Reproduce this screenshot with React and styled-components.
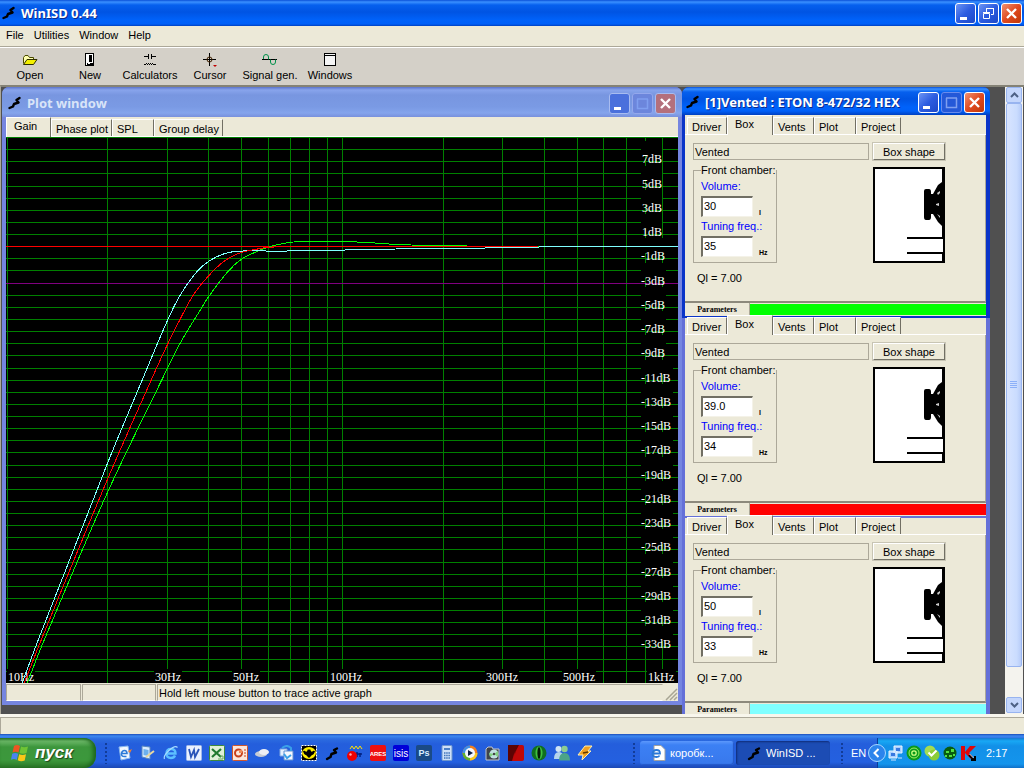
import React from 'react'
import styled, { createGlobalStyle, css } from 'styled-components'

const GlobalStyle = createGlobalStyle`
    * {
        box-sizing: border-box;
    }
    body {
        margin: 0;
        background: #ece9d8;
        font-family: "Liberation Sans", Arial, sans-serif;
        font-size: 11px;
        line-height: 13px;
        color: #000;
    }
    button, input {
        font: inherit;
        color: inherit;
        margin: 0;
        padding: 0;
    }
`

const FREQ_LINES = [10, 20, 30, 40, 50, 60, 70, 80, 90, 100, 200, 300, 400, 500, 600, 700, 800, 900, 1000]

const FREQ_LABELS = [
    { text: '10Hz', x: 1, w: 28 },
    { text: '30Hz', x: 148, w: 28 },
    { text: '50Hz', x: 226, w: 28 },
    { text: '100Hz', x: 323, w: 34 },
    { text: '300Hz', x: 479, w: 34 },
    { text: '500Hz', x: 556, w: 34 },
    { text: '1kHz', x: 641, w: 29 },
]

const CURVES = [
    {
        color: '#00ff00',
        points: [[27, 683], [44, 640], [107, 493], [162, 379], [180, 343], [200, 310], [208, 297], [228, 271], [241, 259], [257, 251], [267, 247], [283, 243], [300, 241], [342, 241], [367, 242], [397, 244], [433, 245], [500, 246], [540, 246], [678, 246]],
    },
    {
        color: '#80ffff',
        points: [[22, 683], [38, 640], [107, 464], [142, 380], [167, 321], [180, 295], [197, 271], [210, 260], [225, 253], [240, 250.6], [280, 250.6], [320, 250], [370, 249], [424, 248], [538, 247], [540, 246], [678, 246]],
    },
    {
        color: '#ff0000',
        points: [[24, 683], [41, 640], [107, 480], [151, 380], [167, 345], [180, 319], [193, 295], [208, 276], [225, 260], [241, 252], [255, 249], [267, 247], [290, 246], [538, 246]],
    },
]

const PROJECTS = [
    { id: 1, title: '[1]Vented : ETON 8-472/32 HEX', volume: '30', tuning: '35', color: '#00ff00' },
    { id: 2, volume: '39.0', tuning: '34', color: '#ff0000' },
    { id: 3, volume: '50', tuning: '33', color: '#80ffff' },
]

const PROJECT_TABS = [
    { name: 'Driver', width: 40 },
    { name: 'Box', width: 46 },
    { name: 'Vents', width: 41 },
    { name: 'Plot', width: 42 },
    { name: 'Project', width: 45 },
]

const PLOT_TABS = [
    { name: 'Gain', width: 45 },
    { name: 'Phase plot', width: 61 },
    { name: 'SPL', width: 42 },
    { name: 'Group delay', width: 69 },
]

/* ---------- icons ---------- */

const Logo = ({ size = 14 }) => (
    <svg width={size} height={size} viewBox="0 0 14 14" aria-hidden="true">
        <path d="M11.500 2L8.500 4L10.500 6.500L6 8L5 10.500L1.500 12" fill="none" stroke="#000" strokeWidth="2.400" strokeLinejoin="round" strokeLinecap="round" />
    </svg>
)

const OpenIcon = () => (
    <svg width="16" height="14" viewBox="0 0 16 14">
        <path d="M1.500 10.500V4.500L3 2.500H6L7.500 4.500H11.500V6.500" fill="#ffffb0" stroke="#4a4a00" />
        <path d="M1.500 11.500L5 6.500H15L11.500 11.500Z" fill="#f4f000" stroke="#303000" />
    </svg>
)

const NewIcon = () => (
    <svg width="16" height="14" viewBox="0 0 16 14" shapeRendering="crispEdges">
        <rect x="3.500" y=".5" width="8" height="12" fill="#fff" stroke="#000" />
        <path d="M7 2h3v7h-3zM5 10h6v2h-6z" fill="#000" />
        <path d="M6 10h2v1h-2z" fill="#fff" />
    </svg>
)

const CalcIcon = () => (
    <svg width="16" height="14" viewBox="0 0 16 14" shapeRendering="crispEdges">
        <path d="M2 3.500H7M9 3.500H14M6.500 1V6M9.500 1V6" stroke="#000" fill="none" />
        <path d="M2 11h2v1H2zM12 11h2v1h-2zM4 10h1v1H4zM5 11h1v1H5zM6 10h1v1H6zM7 11h1v1H7zM8 10h1v1H8zM9 11h1v1H9zM10 10h1v1h-1zM11 11h1v1h-1z" fill="#000" />
    </svg>
)

const CursorIcon = () => (
    <svg width="16" height="14" viewBox="0 0 16 14">
        <path d="M7.500 0V13M1 6.500H14" stroke="#000" fill="none" />
        <circle cx="7.500" cy="6.500" r="2.500" stroke="#402000" fill="none" />
        <path d="M11 12h4l-2 2z" fill="#c00000" />
    </svg>
)

const SignalIcon = () => (
    <svg width="16" height="14" viewBox="0 0 16 14">
        <path d="M0 6.500H15" stroke="#000" />
        <path d="M1.500 6V4Q1.500 1.500 4 1.500T6.500 4V6.500M8.500 6.500V9Q8.500 11.500 11 11.500T13.500 9V6.500" stroke="#00904a" fill="none" />
    </svg>
)

const WindowsIcon = () => (
    <svg width="16" height="14" viewBox="0 0 16 14" shapeRendering="crispEdges">
        <rect x="2.500" y=".5" width="11" height="12" fill="#f4f4f4" stroke="#000" />
        <path d="M2 2.500H14" stroke="#000" />
    </svg>
)

const MinimizeGlyph = () => (
    <svg width="19" height="19" viewBox="0 0 19 19"><path d="M4 13h7v3h-7z" fill="#fff" /></svg>
)

const MaximizeGlyph = () => (
    <svg width="19" height="19" viewBox="0 0 19 19">
        <path d="M4.500 5v9.500h10V5M4 5h11" fill="none" stroke="#7f9ff0" strokeWidth="1.500" />
    </svg>
)

const RestoreGlyph = () => (
    <svg width="19" height="19" viewBox="0 0 19 19">
        <path d="M7.500 8V4.500H14.500V10.500H12M7 4.500H15" fill="none" stroke="#fff" />
        <path d="M4.500 9.500H10.500V14.500H4.500zM4 8.500H11" fill="none" stroke="#fff" />
    </svg>
)

const CloseGlyph = () => (
    <svg width="19" height="19" viewBox="0 0 19 19"><path d="M5 5L14 14M14 5L5 14" stroke="#fff" strokeWidth="2.400" /></svg>
)

const WindowsFlag = () => (
    <svg width="20" height="20" viewBox="0 0 20 20">
        <path d="M4 3Q7 1 10 3L8.500 9.500Q5.500 8 2.500 9.500Z" fill="#ee5522" />
        <path d="M11 3.500Q14 5 18 3.500L16.500 10Q13 11.500 9.500 10Z" fill="#6fc435" />
        <path d="M2.200 10.700Q5 9.200 8.200 10.700L6.700 17Q4 15.300 1 16.800Z" fill="#4a84f0" />
        <path d="M9.200 11.300Q12.500 12.700 16 11.300L14.700 17.500Q11 19 7.700 17.300Z" fill="#fbc718" />
    </svg>
)

const IeGlyph = () => (
    <>
        <path d="M3.500 8.500H12.500Q12.500 4 8 4T3.500 8.500T8 13Q11 13 12 10.500" fill="none" stroke="#5cc0ff" strokeWidth="2.400" />
        <path d="M1.500 14Q0 11 6 5.500T14.500 2.500" fill="none" stroke="#a8dcff" strokeWidth="1.200" />
    </>
)

const Tile = ({ fill, stroke, children }) => (
    <>
        <rect x=".5" y=".5" width="15" height="15" rx="1" fill={fill} stroke={stroke || fill} />
        {children}
    </>
)

const GLYPHS = {
    outlook: (
        <>
            <path d="M2 2l9-1 2 12-9 2z" fill="#f2f8ff" stroke="#8ab8ee" />
            <path d="M4.500 8.500H10Q10 5.500 7.500 5.500T4.500 8.500T7.500 11.500H9.500" fill="none" stroke="#2c7ad8" strokeWidth="1.600" />
            <path d="M11 6l4-2-2 4z" fill="#f08030" />
        </>
    ),
    desktop: (
        <>
            <path d="M2 1l8 1v12l-8-2z" fill="#d8ecff" stroke="#5a88c0" />
            <path d="M3.500 4l5 1v6l-5-1z" fill="#6cb0ee" />
            <path d="M6 12L14 6" stroke="#e8d8a0" strokeWidth="2" />
        </>
    ),
    ie: <IeGlyph />,
    word: (
        <Tile fill="#eaf1ff" stroke="#a0b8e8">
            <path d="M3 4l2 8 3-7 1 7 4-8" fill="none" stroke="#2a54b8" strokeWidth="1.800" />
        </Tile>
    ),
    excel: (
        <Tile fill="#dff0d8" stroke="#3f8a3c">
            <path d="M3 4l9 8M12 4l-9 8" stroke="#217a30" strokeWidth="2.200" />
            <path d="M11 11h3v3h-5" fill="none" stroke="#6aa860" />
        </Tile>
    ),
    powerpoint: (
        <Tile fill="#fbe6dc" stroke="#d0562c">
            <circle cx="6.500" cy="8" r="3.500" fill="none" stroke="#c8401c" strokeWidth="2" />
            <path d="M7 8V5h3v3z" fill="#f08858" />
            <path d="M12 5h2M12 8h2M12 11h2" stroke="#c8401c" />
        </Tile>
    ),
    cloud: (
        <>
            <ellipse cx="6" cy="9" rx="6" ry="3" fill="#c8ccd4" />
            <ellipse cx="9" cy="7" rx="5" ry="3" fill="#eef0f4" />
        </>
    ),
    sync: (
        <>
            <path d="M2 4h7v7H2z" fill="#e4f0ff" stroke="#80a8e0" />
            <path d="M6 6h9v9H6z" fill="#f4f8ff" stroke="#6090d0" />
            <path d="M4 3Q9-1 13 3v3M6 9l3 4 4-3" fill="none" stroke="#3aa0e8" strokeWidth="2" />
        </>
    ),
    bat: (
        <>
            <rect x=".5" y=".5" width="15" height="15" fill="#000" stroke="#fff" strokeDasharray="2 1" />
            <ellipse cx="8" cy="8" rx="7" ry="6" fill="#ffee00" />
            <path d="M2 6Q4 5 5 7Q6 7 7 4L8 5L9 4Q10 7 11 7Q12 5 14 6Q13 10 11 10L8 13L5 10Q3 10 2 6Z" fill="#000" />
        </>
    ),
    winisd: <path d="M13 3.500L10 5L12 7.500L7.500 9L6.500 12L3 14" fill="none" stroke="#000" strokeWidth="2.400" strokeLinecap="round" strokeLinejoin="round" />,
    ball: (
        <>
            <path d="M3 4l2-3 2 3 2-3 2 3 2-3 2 3" fill="none" stroke="#ffe000" />
            <path d="M8 9h7M10 7v5M13 8v4" stroke="#002080" strokeWidth="1.500" />
            <circle cx="5" cy="11" r="5" fill="#f00000" />
            <circle cx="3.500" cy="9.500" r="1.200" fill="#ffb0b0" />
        </>
    ),
    ares: (
        <Tile fill="#ee1010">
            <text x="8" y="11" fontFamily="Liberation Sans" fontWeight="bold" fontSize="6" textAnchor="middle" fill="#fff">ARES</text>
        </Tile>
    ),
    isis: (
        <Tile fill="#0000d8">
            <text x="8" y="12" fontFamily="Liberation Sans" fontSize="10" textAnchor="middle" fill="#fff">isis</text>
        </Tile>
    ),
    photoshop: (
        <Tile fill="#1a4a86">
            <text x="8" y="11" fontFamily="Liberation Sans" fontWeight="bold" fontSize="9" textAnchor="middle" fill="#d8ecff">Ps</text>
        </Tile>
    ),
    calc: (
        <>
            <rect x="3" y=".5" width="10" height="15" rx="1" fill="#cfe0f8" stroke="#6f96cc" />
            <path d="M5 3h6v2H5z" fill="#4c80c8" />
            <path d="M5 8h6M5 10.500h6M5 13h6" stroke="#3c70b8" strokeWidth="1.500" strokeDasharray="1.500 .7" />
        </>
    ),
    player: (
        <>
            <circle cx="8" cy="8" r="7.500" fill="#f08020" />
            <path d="M8 8L8 .5A7.500 7.500 0 0 0 .5 8z" fill="#3f90e8" />
            <path d="M8 8H.5A7.500 7.500 0 0 0 8 15.500z" fill="#60b030" />
            <path d="M8 8v7.500A7.500 7.500 0 0 0 15.500 8z" fill="#f8c820" />
            <circle cx="8" cy="8" r="5" fill="#f4f8ff" />
            <path d="M6 5v6l5-3z" fill="#102040" />
        </>
    ),
    media: (
        <>
            <path d="M1 4l2-2h4l1 2h6v11H1z" fill="#40444c" stroke="#c0c4cc" />
            <circle cx="9" cy="9" r="4.500" fill="#c0e0e0" />
            <path d="M9 9l4-3v6zM9 9l-4 3-1-4z" fill="#80d080" />
            <circle cx="9" cy="9" r="1.200" fill="#404040" />
        </>
    ),
    red: (
        <Tile fill="#c00808">
            <path d="M0 0H11L6 9L4 16H0z" fill="#5c0404" />
            <path d="M10 1L7 8L6 11L8 6z" fill="#200000" />
        </Tile>
    ),
    eye: (
        <>
            <circle cx="8" cy="8" r="7.500" fill="#107020" />
            <ellipse cx="8" cy="8" rx="3.500" ry="6.500" fill="#40c040" />
            <ellipse cx="8" cy="8" rx="1.600" ry="6" fill="#041c08" />
        </>
    ),
    messenger: (
        <>
            <circle cx="4.500" cy="4" r="3" fill="#cfe4f4" />
            <path d="M0 14Q0 7 5 7T9 14z" fill="#b4d4ec" />
            <circle cx="10.500" cy="4" r="3.200" fill="#8ccc90" />
            <path d="M5 15.500Q5 8 10.500 8T16 15.500z" fill="#4ca488" />
        </>
    ),
    winamp: (
        <>
            <path d="M8 1h7l-4 5h3L5 15l1-5H1z" fill="#f0a020" stroke="#fff0b0" />
            <path d="M6 8l5-1" stroke="#603800" strokeWidth="1.500" />
        </>
    ),
    page: (
        <>
            <path d="M4 .5h7l4 4v11H4z" fill="#fff" stroke="#a0a0a0" />
            <path d="M2.500 8.500H10Q10 5 6.500 5T2.500 8.500T6.500 12Q9 12 9.500 10.500" fill="none" stroke="#2a78d8" strokeWidth="1.800" />
        </>
    ),
    network: (
        <>
            <path d="M6 1h8v7H6zM1 6h8v7H1z" fill="#a8d0ff" stroke="#e8f4ff" />
            <path d="M8 3h4v3H8zM3 8h4v3H3z" fill="#3878e0" />
            <path d="M10 13h4M3 15h5" stroke="#d0e4ff" />
        </>
    ),
    agent: (
        <>
            <circle cx="8" cy="8" r="7.500" fill="#0a9a1c" />
            <circle cx="8" cy="8" r="5" fill="none" stroke="#a0f060" />
            <circle cx="8" cy="8" r="2.200" fill="none" stroke="#d0ff80" strokeWidth="1.300" />
        </>
    ),
    skype: (
        <>
            <circle cx="6" cy="6" r="5.500" fill="#a4dc50" />
            <circle cx="10" cy="10" r="5.500" fill="#8ccc38" />
            <path d="M4.500 7.500l3 3 5-5" fill="none" stroke="#fff" strokeWidth="2" />
        </>
    ),
    icq: (
        <>
            <circle cx="8" cy="8" r="6.500" fill="#085c10" />
            <path d="M4 6h3v2H4zM9 4h3v3H9zM7 10h3v2H7zM3 10h2v2H3zM11 9h2v2h-2z" fill="#50e040" />
        </>
    ),
    kaspersky: (
        <>
            <path d="M1 1h4v6l5-6h6L9 8l4 4-2 2-6-6v7H1z" fill="#e00808" />
            <path d="M9 10l5 5M15 11v4h-4" stroke="#000" strokeWidth="2" fill="none" />
            <path d="M9.500 9l4 4" stroke="#fff" strokeWidth=".8" />
        </>
    ),
}

const QUICK_LAUNCH = ['outlook', 'desktop', 'ie', 'word', 'excel', 'powerpoint', 'cloud', 'sync', 'bat', 'winisd', 'ball', 'ares', 'isis', 'photoshop', 'calc', 'player', 'media', 'red', 'eye', 'messenger', 'winamp']
const TRAY = ['network', 'agent', 'skype', 'icq', 'kaspersky']

const Glyph = ({ name }) => (
    <svg width="16" height="16" viewBox="0 0 16 16">{GLYPHS[name]}</svg>
)

/* ---------- plot ---------- */

const PLOT_W = 672
const PLOT_H = 546
const px = (x) => `${(x / PLOT_W) * 100}%`
const py = (y) => `${(y / PLOT_H) * 100}%`
const freqX = (f) => Math.floor(1 + 335.5 * Math.log10(f / 10))
const gainY = (db) => Math.floor(109.7 - 12.13 * db)

const levelColor = (db) => {
    if (db === 0) return '#ff0000'
    if (db === -3) return '#800080'
    return '#008000'
}

// smooth line through the sampled points
const toPath = (pts) => {
    let d = `M${pts[0][0]} ${pts[0][1]}`
    for (let i = 0; i < pts.length - 1; i++) {
        const a = pts[i - 1] || pts[i]
        const b = pts[i]
        const c = pts[i + 1]
        const e = pts[i + 2] || c
        const k = (c[0] - b[0]) / 3
        const s1 = (c[1] - a[1]) / (c[0] - a[0])
        const s2 = (e[1] - b[1]) / (e[0] - b[0])
        d += `C${b[0] + k} ${b[1] + s1 * k} ${c[0] - k} ${c[1] - s2 * k} ${c[0]} ${c[1]}`
    }
    return d
}

function GainPlot() {
    const levels = []
    for (let db = 9; db >= -35; db--) levels.push(db)
    const labels = levels.filter((db) => db % 2 !== 0 && db <= 7 && db >= -33)

    return (
        <PlotSvg role="img" aria-label="Gain">
            <g shapeRendering="crispEdges">
                {FREQ_LINES.map((f) => (
                    <rect key={f} x={px(freqX(f))} y="0" width="1" height="100%" fill="#008000" />
                ))}
                {levels.map((db) => (
                    <rect key={db} x="0" y={py(gainY(db))} width="100%" height="1" fill={levelColor(db)} />
                ))}
            </g>
            {labels.map((db) => (
                <g key={db}>
                    <rect x={px(635)} y={py(gainY(db) - 20)} width={db < -9 ? 32 : db < 0 ? 25 : 21} height="15" />
                    <PlotLabel x={px(db < 0 ? 635 : 636)} y={py(gainY(db) + 2)}>{db}dB</PlotLabel>
                </g>
            ))}
            {FREQ_LABELS.map((l) => (
                <g key={l.text}>
                    <rect x={px(l.x)} y={py(532)} width={l.w} height="14" />
                    <PlotLabel x={px(l.x + 1)} y={py(544)}>{l.text}</PlotLabel>
                </g>
            ))}
            <svg width="100%" height="100%" viewBox="6 136.500 672 546" preserveAspectRatio="none">
                {CURVES.map((c) => (
                    <path key={c.color} d={toPath(c.points)} fill="none" stroke={c.color} shapeRendering="crispEdges" vectorEffect="non-scaling-stroke" />
                ))}
            </svg>
        </PlotSvg>
    )
}

const BoxDrawing = () => (
    <svg width="72" height="96" viewBox="0 0 72 96" role="img" aria-label="Vented box">
        <path d="M0 0H72V96H0z" />
        <path d="M2 2H69V94H2z" fill="#fff" />
        <path d="M69 72H70V86H69z" fill="#fff" />
        <path d="M34 70h36v2H34zM34 85h36v2H34z" />
        <path d="M51 24Q51 22 53 22H56Q58 22 58 25V27H60L65 18L69 15V59L65 55L60 47H58V50Q58 53 56 53H53Q51 53 51 50z" />
        <path d="M64 26l3-2v2l-2 2zM63 37l3-1v3l-3-1zM64 47l3 2v2z" fill="#ccc" />
    </svg>
)

/* ---------- parts ---------- */

function WindowButtons({ restore, dim }) {
    return (
        <Caption>
            <CaptionButton type="button" aria-label="Minimize" $dim={dim}><MinimizeGlyph /></CaptionButton>
            <CaptionButton type="button" aria-label="Maximize" $dim={dim} $off={!restore}>
                {restore ? <RestoreGlyph /> : <MaximizeGlyph />}
            </CaptionButton>
            <CaptionButton type="button" aria-label="Close" $dim={dim} $close><CloseGlyph /></CaptionButton>
        </Caption>
    )
}

function Tabs({ items, active, short, inset }) {
    return (
        <TabStrip role="tablist" $short={short} $inset={inset}>
            {items.map((t) => (
                <Tab key={t.name} type="button" role="tab" aria-selected={t.name === active} $active={t.name === active} $width={t.width}>
                    {t.name}
                </Tab>
            ))}
        </TabStrip>
    )
}

function ProjectWindow({ project }) {
    const { id, title, volume, tuning, color } = project
    return (
        <ProjectFrame $active={!!title}>
            {title && (
                <ProjectTitle>
                    <Logo />
                    <TitleText>{title}</TitleText>
                    <WindowButtons />
                </ProjectTitle>
            )}
            <Tabs items={PROJECT_TABS} active="Box" short={!title} inset />
            <ProjectPage>
                <PageRow>
                    <BoxType>Vented</BoxType>
                    <ShapeButton type="button">Box shape</ShapeButton>
                </PageRow>
                <PageRow>
                    <Chamber>
                        <legend>Front chamber:</legend>
                        <FieldLabel htmlFor={`volume-${id}`}>Volume:</FieldLabel>
                        <Field>
                            <FieldInput id={`volume-${id}`} defaultValue={volume} />
                            <Unit>l</Unit>
                        </Field>
                        <FieldLabel htmlFor={`tuning-${id}`}>Tuning freq.:</FieldLabel>
                        <Field>
                            <FieldInput id={`tuning-${id}`} defaultValue={tuning} />
                            <Unit>Hz</Unit>
                        </Field>
                    </Chamber>
                    <Drawing><BoxDrawing /></Drawing>
                </PageRow>
                <Losses>Ql = 7.00</Losses>
            </ProjectPage>
            <ParamRow>
                <ParamButton type="button">Parameters</ParamButton>
                <ColorBar $color={color} />
            </ParamRow>
        </ProjectFrame>
    )
}

function App() {
    return (
        <Desktop>
            <GlobalStyle />
            <MainTitle>
                <Logo />
                <TitleText>WinISD 0.44</TitleText>
                <WindowButtons restore />
            </MainTitle>
            <MenuBar>
                <MenuItem type="button">File</MenuItem>
                <MenuItem type="button">Utilities</MenuItem>
                <MenuItem type="button">Window</MenuItem>
                <MenuItem type="button">Help</MenuItem>
            </MenuBar>
            <Toolbar>
                <Tool type="button"><OpenIcon />Open</Tool>
                <Tool type="button"><NewIcon />New</Tool>
                <Tool type="button"><CalcIcon />Calculators</Tool>
                <Tool type="button"><CursorIcon />Cursor</Tool>
                <Tool type="button"><SignalIcon />Signal gen.</Tool>
                <Tool type="button"><WindowsIcon />Windows</Tool>
            </Toolbar>

            <Workspace>
                <PlotFrame>
                    <PlotTitle>
                        <Logo />
                        <TitleText $dim>Plot window</TitleText>
                        <WindowButtons dim />
                    </PlotTitle>
                    <Tabs items={PLOT_TABS} active="Gain" />
                    <PlotArea>
                        <GainPlot />
                    </PlotArea>
                    <PlotStatus>
                        <StatusCell $width={75} />
                        <StatusCell $width={74} />
                        <StatusCell $last>Hold left mouse button to trace active graph</StatusCell>
                        <svg width="14" height="16" viewBox="0 0 14 16">
                            <path d="M2 15L13 4M6 15L13 8M10 15L13 12" stroke="#a8a594" strokeWidth="1.500" />
                        </svg>
                    </PlotStatus>
                </PlotFrame>
                <ProjectList>
                    {PROJECTS.map((p) => <ProjectWindow key={p.id} project={p} />)}
                </ProjectList>
                <ScrollBar>
                    <ScrollButton type="button" aria-label="Scroll up">
                        <svg width="9" height="6" viewBox="0 0 9 6"><path d="M1 5L4.500 1.500L8 5" fill="none" stroke="#4d6185" strokeWidth="2" /></svg>
                    </ScrollButton>
                    <ScrollThumb>
                        <svg width="8" height="8" viewBox="0 0 8 8" shapeRendering="crispEdges"><path d="M0 .5H7M0 2.500H7M0 4.500H7M0 6.500H7" stroke="#8cb0f8" /></svg>
                    </ScrollThumb>
                    <ScrollButton type="button" aria-label="Scroll down">
                        <svg width="9" height="6" viewBox="0 0 9 6"><path d="M1 1L4.500 4.500L8 1" fill="none" stroke="#4d6185" strokeWidth="2" /></svg>
                    </ScrollButton>
                </ScrollBar>
            </Workspace>
            <StatusBar />

            <TaskBar>
                <StartButton type="button"><WindowsFlag />пуск</StartButton>
                <Grip />
                <QuickLaunch>
                    {QUICK_LAUNCH.map((name) => (
                        <IconButton key={name} type="button" aria-label={name}><Glyph name={name} /></IconButton>
                    ))}
                </QuickLaunch>
                <Grip />
                <TaskButton type="button"><Glyph name="page" />коробк...</TaskButton>
                <TaskButton type="button" $pressed><Glyph name="winisd" />WinISD ...</TaskButton>
                <Grip />
                <Language>EN</Language>
                <Tray>
                    <TrayToggle type="button" aria-label="Show icons">
                        <svg width="16" height="16" viewBox="0 0 16 16"><path d="M9.500 4L5.500 8L9.500 12" fill="none" stroke="#fff" strokeWidth="2" /></svg>
                    </TrayToggle>
                    {TRAY.map((name) => <Glyph key={name} name={name} />)}
                    <Clock>2:17</Clock>
                </Tray>
            </TaskBar>
        </Desktop>
    )
}

export default App

const Desktop = styled.div`
    display: flex;
    flex-direction: column;
    height: 100vh;
    overflow: hidden;
`

const activeTitle = css`
    background: linear-gradient(#0a50d8 0, #3a90ff 2px, #0660ee 5px, #0054e3 12px, #0062fa 20px, #0060f8 24px, #0040c0 100%);
`

const MainTitle = styled.header`
    ${activeTitle}
    flex: none;
    display: flex;
    align-items: center;
    height: 26px;
    padding: 0 2px;
`
const TitleText = styled.div`
    flex: 1;
    padding-left: 5px;
    font-family: "Noto Sans", "Open Sans", sans-serif;
    font-size: 13px;
    font-weight: 700;
    line-height: 16px;
    white-space: nowrap;
    color: ${(p) => (p.$dim ? '#d8e4f8' : '#fff')};
    text-shadow: ${(p) => (p.$dim ? 'none' : '1px 1px #0c2a8c')};
`
const Caption = styled.div`
    display: flex;
    gap: 2px;
`
const CaptionButton = styled.button`
    display: block;
    width: 21px;
    height: 21px;
    border: 1px solid ${(p) => (p.$dim || p.$off ? '#a8bcf0' : '#fff')};
    border-radius: 3px;
    background: ${(p) => (p.$close
        ? (p.$dim ? '#b4707c' : 'linear-gradient(135deg, #f09070, #e04a20 50%, #c03808)')
        : p.$off
            ? (p.$dim ? '#6c86dc' : '#2458d8')
            : (p.$dim ? '#4a70dc' : 'linear-gradient(135deg, #6c94f4, #2c5ce0 50%, #1c48c8)'))};
    ${(p) => p.$off && `border-color: ${p.$dim ? '#94a8ec' : '#6a8cec'};`}

    svg {
        display: block;
    }
`

const MenuBar = styled.nav`
    flex: none;
    display: flex;
    height: 21px;
    padding-left: 1px;
    border-bottom: 1px solid #aca899;
`
const MenuItem = styled.button`
    padding: 0 5px;
    border: 0;
    background: none;
    height: 19px;
`
const Toolbar = styled.div`
    flex: none;
    display: flex;
    height: 38px;
    background: #d4d0c8;
    border-top: 1px solid #fff;
`
const Tool = styled.button`
    display: flex;
    flex-direction: column;
    align-items: center;
    gap: 2px;
    width: 60px;
    padding-top: 5px;
    border: 0;
    background: none;
    white-space: nowrap;
`

const Workspace = styled.main`
    flex: 1;
    min-height: 0;
    display: flex;
    padding-left: 1px;
    background: #505050;
    border-top: 2px solid #848276;
    border-left: 1px solid #aca899;
    overflow: hidden;
`
const PlotFrame = styled.section`
    flex: 1;
    min-width: 0;
    display: flex;
    flex-direction: column;
    margin-bottom: 9px;
    padding: 0 4px 4px;
    background: #7585e0;
    border-radius: 7px 7px 0 0;
`
const PlotTitle = styled.div`
    flex: none;
    display: flex;
    align-items: center;
    height: 30px;
    margin: 0 -4px;
    padding: 2px 6px 0;
    border-radius: 7px 7px 0 0;
    background: linear-gradient(#5c74cc 0, #88a4ec 3px, #7896e0 8px, #7a9ae4 20px, #84a4ec 26px, #7890dc 100%);
`
const TabStrip = styled.div`
    flex: none;
    display: flex;
    align-items: flex-end;
    height: ${(p) => (p.$short ? 17 : 20)}px;
    padding-left: ${(p) => (p.$inset ? 2 : 0)}px;
    background: #ece9d8;
    border-bottom: 1px solid #fff;
`
const Tab = styled.button`
    flex: none;
    width: ${(p) => p.$width}px;
    height: ${(p) => (p.$active ? 20 : 17)}px;
    padding: ${(p) => (p.$active ? '0 0 2px 7px' : '2px 0 0 4px')};
    ${(p) => p.$active && 'margin-bottom: -1px;'}
    border: 0;
    border-left: 1px solid #fff;
    border-top: 1px solid #fff;
    border-right: 1px solid #716f64;
    background: #ece9d8;
    text-align: left;
    white-space: nowrap;
`
const PlotArea = styled.div`
    flex: 1;
    min-height: 0;
    background: #000;
`
const PlotSvg = styled.svg`
    display: block;
    width: 100%;
    height: 100%;
`
const PlotLabel = styled.text`
    fill: #fff;
    font-family: "Liberation Serif", "Times New Roman", serif;
    font-size: 12px;
`
const PlotStatus = styled.div`
    flex: none;
    display: flex;
    align-items: flex-end;
    gap: 1px;
    height: 18px;
    background: #ece9d8;
`
const StatusCell = styled.div`
    height: 17px;
    padding: 2px 1px 0;
    border: 1px solid #aca899;
    border-right-color: ${(p) => (p.$last ? 'transparent' : '#aca899')};
    border-bottom-color: #fff;
    ${(p) => (p.$last ? 'flex: 1;' : `width: ${p.$width}px;`)}
`

const ProjectList = styled.div`
    flex: none;
    width: 308px;
    margin-right: 15px;
`
const ProjectFrame = styled.section`
    padding: 0 4px 2px 3px;
    background: ${(p) => (p.$active ? '#0a34c8' : '#6470d8')};
    border-radius: ${(p) => (p.$active ? '7px 7px 0 0' : '0')};
`
const ProjectTitle = styled.div`
    ${activeTitle}
    display: flex;
    align-items: center;
    height: 28px;
    margin: 0 -4px 0 -3px;
    padding: 2px 5px 0 4px;
    border-radius: 7px 7px 0 0;
`
const ProjectPage = styled.div`
    display: flex;
    flex-direction: column;
    gap: 4px;
    height: 168px;
    padding: 8px 8px 0;
    background: #ece9d8;
    border-right: 1px solid #aca899;
    border-bottom: 2px solid #8c897c;
`
const PageRow = styled.div`
    display: grid;
    grid-template-columns: 176px 72px;
    column-gap: 4px;
`
const BoxType = styled.div`
    height: 17px;
    padding: 2px 1px 0;
    border: 1px solid #aca899;
`
const ShapeButton = styled.button`
    height: 17px;
    padding-top: 1px;
    border: 1px solid;
    border-color: #fff #716f64 #716f64 #fff;
    outline: 1px solid #c8c5b4;
    outline-offset: 0;
    background: #ece9d8;
`
const Chamber = styled.fieldset`
    width: 84px;
    min-width: 0;
    margin: 0;
    padding: 0 0 4px 7px;
    border: 1px solid #aca899;

    legend {
        padding: 0;
        white-space: nowrap;
    }
`
const FieldLabel = styled.label`
    display: block;
    height: 19px;
    padding-top: 3px;
    color: #0000ff;
`
const Field = styled.div`
    display: flex;
    align-items: flex-end;
    gap: 6px;
`
const FieldInput = styled.input`
    width: 52px;
    height: 21px;
    padding: 0 1px 2px;
    border: 1px solid;
    border-color: #716f64 #f4f2e8 #f4f2e8 #716f64;
    border-width: 2px 1px 1px 2px;
    background: #fff;
`
const Unit = styled.span`
    font-size: 7px;
    font-weight: 700;
    line-height: 9px;
`
const Drawing = styled.div`
    padding-top: 3px;

    svg {
        display: block;
    }
`
const Losses = styled.div`
    padding: 5px 4px 0;
`
const ParamRow = styled.div`
    display: flex;
    height: 13px;
    background: #ece9d8;
`
const ParamButton = styled.button`
    width: 65px;
    border: 0;
    border-right: 1px solid #aca899;
    background: #ece9d8;
    font-family: "Liberation Serif", "Times New Roman", serif;
    font-size: 8px;
    font-weight: 700;
    line-height: 12px;
`
const ColorBar = styled.div`
    flex: 1;
    margin: 1px 0;
    background: ${(p) => p.$color};
`

const ScrollBar = styled.div`
    flex: none;
    display: flex;
    flex-direction: column;
    width: 18px;
    padding: 0 1px 1px;
    margin-right: 1px;
    background: #f4f3ee;
`
const ScrollButton = styled.button`
    flex: none;
    height: 16px;
    border: 1px solid #98b4f0;
    border-radius: 2px;
    background: #c4d6fc;
    display: flex;
    align-items: center;
    justify-content: center;
`
const ScrollThumb = styled.div`
    flex: 1;
    display: flex;
    align-items: center;
    justify-content: center;
    margin-bottom: 30px;
    border: 1px solid #98b4f0;
    border-radius: 2px;
    background: linear-gradient(90deg, #d8e4ff, #cadcfe 70%, #b8ccf8);
`
const StatusBar = styled.footer`
    flex: none;
    height: 20px;
    background: #ece9d8;
    border-top: 3px solid #f8f6ec;

    &::before {
        content: '';
        display: block;
        height: 16px;
        border-top: 1px solid #aca899;
        border-left: 1px solid #aca899;
    }
`

const TaskBar = styled.div`
    flex: none;
    display: flex;
    align-items: stretch;
    height: 34px;
    padding-top: 4px;
    background: linear-gradient(#1c4cb8 0, #3c88f0 2px, #2c6ce0 5px, #245edc 10px, #2460e0 28px, #1c48b4 100%);
    color: #fff;
`
const StartButton = styled.button`
    flex: none;
    display: flex;
    align-items: center;
    gap: 5px;
    width: 96px;
    padding-left: 10px;
    border: 0;
    border-radius: 0 12px 12px 0;
    background: linear-gradient(#2c7a2c 0, #6cb868 3px, #3c963c 9px, #3c983c 22px, #2c7828 100%);
    box-shadow: inset -3px 0 4px #1c641c;
    color: #fff;
    font-size: 17px;
    font-weight: 700;
    font-style: italic;
    line-height: 20px;
    text-shadow: 1px 1px 1px #1c441c;
`
const Grip = styled.div`
    flex: none;
    width: 4px;
    margin: 4px 4px 4px 8px;
    background: radial-gradient(circle, #123c98 1px, transparent 1px) 0 0 / 4px 4px;
`
const QuickLaunch = styled.div`
    flex: 1;
    display: flex;
    align-items: center;
    gap: 7px;
    padding-left: 5px;
`
const IconButton = styled.button`
    flex: none;
    width: 16px;
    height: 16px;
    border: 0;
    background: none;

    svg {
        display: block;
    }
`
const TaskButton = styled.button`
    flex: none;
    display: flex;
    align-items: center;
    gap: 4px;
    width: 94px;
    margin: 3px 2px 3px 0;
    padding-left: 10px;
    border: 0;
    border-radius: 3px;
    background: ${(p) => (p.$pressed ? '#1c4cb4' : 'linear-gradient(#5c98fc, #3c80f4 4px, #3878ec)')};
    box-shadow: ${(p) => (p.$pressed ? 'inset 1px 1px 2px #102c78' : 'inset -1px -1px 1px #2458c8')};
    white-space: nowrap;
`
const Language = styled.div`
    flex: none;
    align-self: center;
    width: 29px;
    padding-left: 3px;
`
const Tray = styled.div`
    flex: none;
    display: flex;
    align-items: center;
    gap: 2px;
    width: 147px;
    background: linear-gradient(#1878d0 0, #18a8f4 3px, #1290e8 8px, #1494ec 26px, #1070c8 100%);
    border-left: 1px solid #0c3c98;
`
const TrayToggle = styled.button`
    flex: none;
    width: 18px;
    height: 18px;
    margin-left: -10px;
    border: 1px solid #a8d8ff;
    border-radius: 50%;
    background: #2c84ec;

    svg {
        display: block;
    }
`
const Clock = styled.time`
    padding-left: 8px;
`
